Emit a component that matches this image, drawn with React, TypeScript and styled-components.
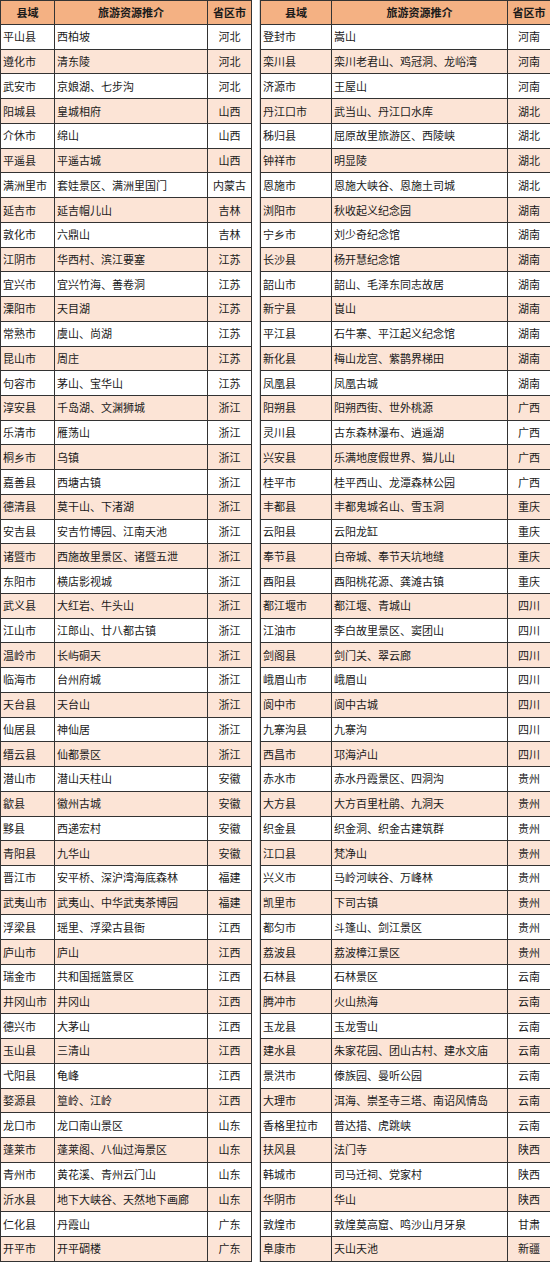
import React from 'react';
import styled, { createGlobalStyle } from 'styled-components';

const GlobalStyle = createGlobalStyle`
  html, body {
    margin: 0;
    padding: 0;
    background: #ffffff;
  }
  body {
    font-family: "Noto Sans CJK SC", "Liberation Sans", sans-serif;
  }
`;

type Row = [string, string, string];

const leftRows: Row[] = [
  ['平山县', '西柏坡', '河北'],
  ['遵化市', '清东陵', '河北'],
  ['武安市', '京娘湖、七步沟', '河北'],
  ['阳城县', '皇城相府', '山西'],
  ['介休市', '绵山', '山西'],
  ['平遥县', '平遥古城', '山西'],
  ['满洲里市', '套娃景区、满洲里国门', '内蒙古'],
  ['延吉市', '延吉帽儿山', '吉林'],
  ['敦化市', '六鼎山', '吉林'],
  ['江阴市', '华西村、滨江要塞', '江苏'],
  ['宜兴市', '宜兴竹海、善卷洞', '江苏'],
  ['溧阳市', '天目湖', '江苏'],
  ['常熟市', '虞山、尚湖', '江苏'],
  ['昆山市', '周庄', '江苏'],
  ['句容市', '茅山、宝华山', '江苏'],
  ['淳安县', '千岛湖、文渊狮城', '浙江'],
  ['乐清市', '雁荡山', '浙江'],
  ['桐乡市', '乌镇', '浙江'],
  ['嘉善县', '西塘古镇', '浙江'],
  ['德清县', '莫干山、下渚湖', '浙江'],
  ['安吉县', '安吉竹博园、江南天池', '浙江'],
  ['诸暨市', '西施故里景区、诸暨五泄', '浙江'],
  ['东阳市', '横店影视城', '浙江'],
  ['武义县', '大红岩、牛头山', '浙江'],
  ['江山市', '江郎山、廿八都古镇', '浙江'],
  ['温岭市', '长屿硐天', '浙江'],
  ['临海市', '台州府城', '浙江'],
  ['天台县', '天台山', '浙江'],
  ['仙居县', '神仙居', '浙江'],
  ['缙云县', '仙都景区', '浙江'],
  ['潜山市', '潜山天柱山', '安徽'],
  ['歙县', '徽州古城', '安徽'],
  ['黟县', '西递宏村', '安徽'],
  ['青阳县', '九华山', '安徽'],
  ['晋江市', '安平桥、深沪湾海底森林', '福建'],
  ['武夷山市', '武夷山、中华武夷茶博园', '福建'],
  ['浮梁县', '瑶里、浮梁古县衙', '江西'],
  ['庐山市', '庐山', '江西'],
  ['瑞金市', '共和国摇篮景区', '江西'],
  ['井冈山市', '井冈山', '江西'],
  ['德兴市', '大茅山', '江西'],
  ['玉山县', '三清山', '江西'],
  ['弋阳县', '龟峰', '江西'],
  ['婺源县', '篁岭、江岭', '江西'],
  ['龙口市', '龙口南山景区', '山东'],
  ['蓬莱市', '蓬莱阁、八仙过海景区', '山东'],
  ['青州市', '黄花溪、青州云门山', '山东'],
  ['沂水县', '地下大峡谷、天然地下画廊', '山东'],
  ['仁化县', '丹霞山', '广东'],
  ['开平市', '开平碉楼', '广东'],
];

const rightRows: Row[] = [
  ['登封市', '嵩山', '河南'],
  ['栾川县', '栾川老君山、鸡冠洞、龙峪湾', '河南'],
  ['济源市', '王屋山', '河南'],
  ['丹江口市', '武当山、丹江口水库', '湖北'],
  ['秭归县', '屈原故里旅游区、西陵峡', '湖北'],
  ['钟祥市', '明显陵', '湖北'],
  ['恩施市', '恩施大峡谷、恩施土司城', '湖北'],
  ['浏阳市', '秋收起义纪念园', '湖南'],
  ['宁乡市', '刘少奇纪念馆', '湖南'],
  ['长沙县', '杨开慧纪念馆', '湖南'],
  ['韶山市', '韶山、毛泽东同志故居', '湖南'],
  ['新宁县', '崀山', '湖南'],
  ['平江县', '石牛寨、平江起义纪念馆', '湖南'],
  ['新化县', '梅山龙宫、紫鹊界梯田', '湖南'],
  ['凤凰县', '凤凰古城', '湖南'],
  ['阳朔县', '阳朔西街、世外桃源', '广西'],
  ['灵川县', '古东森林瀑布、逍遥湖', '广西'],
  ['兴安县', '乐满地度假世界、猫儿山', '广西'],
  ['桂平市', '桂平西山、龙潭森林公园', '广西'],
  ['丰都县', '丰都鬼城名山、雪玉洞', '重庆'],
  ['云阳县', '云阳龙缸', '重庆'],
  ['奉节县', '白帝城、奉节天坑地缝', '重庆'],
  ['酉阳县', '酉阳桃花源、龚滩古镇', '重庆'],
  ['都江堰市', '都江堰、青城山', '四川'],
  ['江油市', '李白故里景区、窦团山', '四川'],
  ['剑阁县', '剑门关、翠云廊', '四川'],
  ['峨眉山市', '峨眉山', '四川'],
  ['阆中市', '阆中古城', '四川'],
  ['九寨沟县', '九寨沟', '四川'],
  ['西昌市', '邛海泸山', '四川'],
  ['赤水市', '赤水丹霞景区、四洞沟', '贵州'],
  ['大方县', '大方百里杜鹃、九洞天', '贵州'],
  ['织金县', '织金洞、织金古建筑群', '贵州'],
  ['江口县', '梵净山', '贵州'],
  ['兴义市', '马岭河峡谷、万峰林', '贵州'],
  ['凯里市', '下司古镇', '贵州'],
  ['都匀市', '斗篷山、剑江景区', '贵州'],
  ['荔波县', '荔波樟江景区', '贵州'],
  ['石林县', '石林景区', '云南'],
  ['腾冲市', '火山热海', '云南'],
  ['玉龙县', '玉龙雪山', '云南'],
  ['建水县', '朱家花园、团山古村、建水文庙', '云南'],
  ['景洪市', '傣族园、曼听公园', '云南'],
  ['大理市', '洱海、崇圣寺三塔、南诏风情岛', '云南'],
  ['香格里拉市', '普达措、虎跳峡', '云南'],
  ['扶风县', '法门寺', '陕西'],
  ['韩城市', '司马迁祠、党家村', '陕西'],
  ['华阴市', '华山', '陕西'],
  ['敦煌市', '敦煌莫高窟、鸣沙山月牙泉', '甘肃'],
  ['阜康市', '天山天池', '新疆'],
];

const Page = styled.div`
  display: flex;
  align-items: flex-start;
  width: 550px;
  height: 1263px;
`;

const Sheet = styled.table<{ $width: number }>`
  width: ${p => p.$width}px;
  height: 1262px;
  table-layout: fixed;
  border-collapse: collapse;
  flex: none;
`;

const Spacer = styled.div`
  width: 8px;
  height: 1262px;
  flex: none;
  box-sizing: border-box;
  border-right: 1px solid #d9d9d9;
`;

const HeadCell = styled.th`
  height: 23px;
  padding: 0;
  background: #f4b183;
  border: 1px solid #333;
  font-size: 11px;
  font-weight: 700;
  color: #1a1a1a;
  text-align: center;
  line-height: 1;
`;

const BodyRow = styled.tr<{ $shaded: boolean }>`
  background: ${p => (p.$shaded ? '#fce4d6' : '#ffffff')};
`;

const Cell = styled.td<{ $center?: boolean }>`
  padding: ${p => (p.$center ? '0' : '0 0 0 2px')};
  border: 1px solid #333;
  font-size: 11px;
  color: #1a1a1a;
  white-space: nowrap;
  overflow: hidden;
  text-align: ${p => (p.$center ? 'center' : 'left')};
  line-height: 1;
`;

interface TableProps {
  rows: Row[];
  widths: [number, number, number];
}

function RegionTable({ rows, widths }: TableProps) {
  const total = widths[0] + widths[1] + widths[2];
  return (
    <Sheet $width={total}>
      <colgroup>
        {widths.map((w, i) => (
          <col key={i} style={{ width: w }} />
        ))}
      </colgroup>
      <thead>
        <tr>
          <HeadCell>县域</HeadCell>
          <HeadCell>旅游资源推介</HeadCell>
          <HeadCell>省区市</HeadCell>
        </tr>
      </thead>
      <tbody>
        {rows.map((r, i) => (
          <BodyRow key={r[0]} $shaded={i % 2 === 1}>
            <Cell>{r[0]}</Cell>
            <Cell>{r[1]}</Cell>
            <Cell $center>{r[2]}</Cell>
          </BodyRow>
        ))}
      </tbody>
    </Sheet>
  );
}

export default function App() {
  return (
    <>
      <GlobalStyle />
      <Page>
        <RegionTable rows={leftRows} widths={[54, 153, 44]} />
        <Spacer />
        <RegionTable rows={rightRows} widths={[71, 176, 43]} />
      </Page>
    </>
  );
}
